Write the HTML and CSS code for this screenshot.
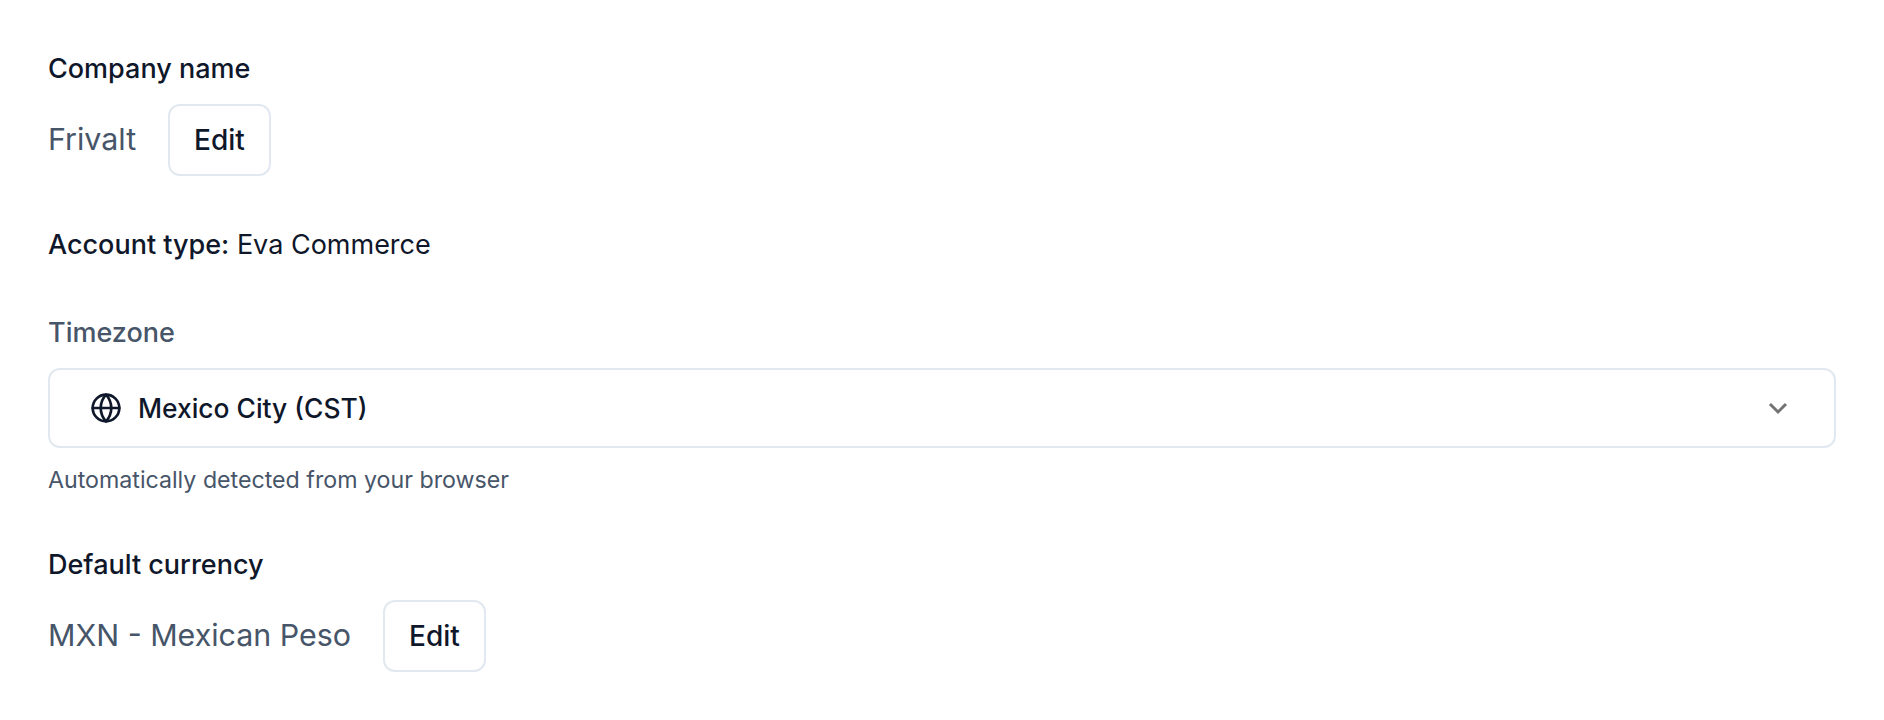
FILE: index.html
```html
<!DOCTYPE html>
<html lang="en">
<head>
    <meta charset="UTF-8">
    <meta name="viewport" content="width=device-width, initial-scale=1.0">
    <title>Account settings</title>
    <link rel="stylesheet" href="styles.css">
</head>
<body>
    <div class="settings">
        <section class="field company">
            <h3 class="label">Company name</h3>
            <div class="value-row">
                <span class="value">Frivalt</span>
                <button class="btn">Edit</button>
            </div>
        </section>

        <p class="account"><strong>Account type:</strong> Eva Commerce</p>

        <section class="field timezone">
            <label class="label muted">Timezone</label>
            <div class="select">
                <svg class="globe" viewBox="0 0 24 24" fill="none" stroke="currentColor" stroke-width="2" stroke-linecap="round" stroke-linejoin="round">
                    <circle cx="12" cy="12" r="10"/>
                    <path d="M2 12h20"/>
                    <path d="M12 2a15.3 15.3 0 0 1 4 10 15.3 15.3 0 0 1-4 10 15.3 15.3 0 0 1-4-10 15.3 15.3 0 0 1 4-10z"/>
                </svg>
                <span class="select-text">Mexico City (CST)</span>
                <svg class="chevron" viewBox="0 0 24 24" fill="none" stroke="currentColor" stroke-width="3">
                    <path d="M4 8l8 8 8-8"/>
                </svg>
            </div>
            <p class="hint">Automatically detected from your browser</p>
        </section>

        <section class="field currency">
            <h3 class="label">Default currency</h3>
            <div class="value-row">
                <span class="value">MXN - Mexican Peso</span>
                <button class="btn">Edit</button>
            </div>
        </section>
    </div>
</body>
</html>
```

FILE: styles.css
```css
body {
    font-family: Inter, "Noto Sans", sans-serif;
    margin: 0;
    padding: 0;
    background-color: #fff;
    color: #0f172a;
}
.settings {
    padding: 51px 48px 0;
}
.label {
    display: block;
    margin: 0;
    font-size: 27px;
    line-height: 36px;
    font-weight: 500;
}
.muted {
    color: #475569;
}
.value-row {
    display: flex;
    align-items: center;
    gap: 32px;
    margin-top: 17px;
}
.value {
    padding-bottom: 2px;
    font-size: 30.4px;
    line-height: 40px;
    color: #475569;
}
.btn {
    height: 72px;
    padding: 0 24px;
    font-family: inherit;
    font-size: 28px;
    font-weight: 500;
    background-color: #fff;
    color: #0f172a;
    border: 2px solid #e2e8f0;
    border-radius: 12px;
}
.account {
    margin: 51px 0 0;
    font-size: 27px;
    line-height: 36px;
}
.account strong {
    font-weight: 500;
}
.timezone {
    margin-top: 52px;
}
.select {
    display: flex;
    align-items: center;
    height: 80px;
    margin-top: 17px;
    padding: 0 44px 0 40px;
    box-sizing: border-box;
    border: 2px solid #e2e8f0;
    border-radius: 12px;
}
.globe {
    width: 32px;
    height: 32px;
}
.select-text {
    flex: 1;
    margin-left: 16px;
    font-size: 26.4px;
    font-weight: 500;
}
.chevron {
    width: 24px;
    height: 24px;
    color: #737373;
}
.hint {
    margin: 16px 0 0;
    font-size: 23.2px;
    line-height: 32px;
    color: #475569;
}
.currency {
    margin-top: 51px;
}
```
